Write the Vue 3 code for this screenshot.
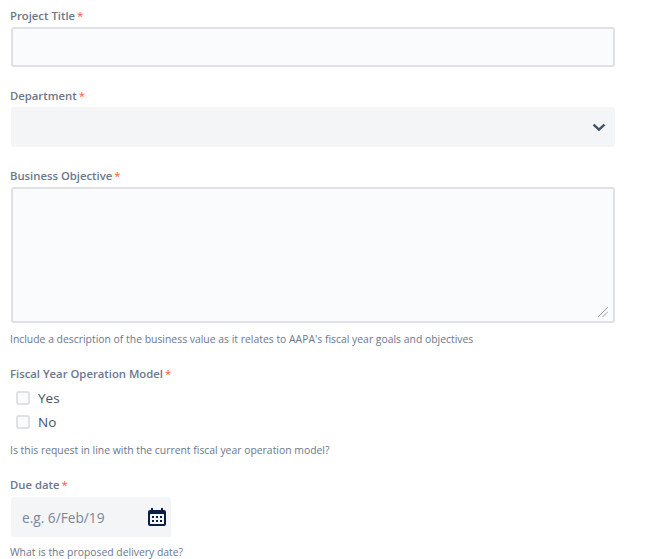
<script setup>
const options = ['Yes', 'No']
</script>

<template>
  <form class="form">
    <div class="field">
      <label class="label">Project Title<span class="req">*</span></label>
      <div class="input"></div>
    </div>
    <div class="field">
      <label class="label">Department<span class="req">*</span></label>
      <div class="select">
        <svg width="14" height="9" viewBox="0 0 14 9"><path d="M1.6 1.6 7 6.6l5.4-5" fill="none" stroke="#42526e" stroke-width="2.4"/></svg>
      </div>
    </div>
    <div class="field tight">
      <label class="label">Business Objective<span class="req">*</span></label>
      <div class="input area">
        <svg class="grip" width="10" height="10" viewBox="0 0 10 10"><path d="M0.5 9.5 9.5 0.5M5 9.5 9.5 5" stroke="#555" stroke-width="1" stroke-dasharray="1 .5" fill="none"/></svg>
      </div>
      <p class="help">Include a description of the business value as it relates to AAPA's fiscal year goals and objectives</p>
    </div>
    <div class="field tight">
      <label class="label">Fiscal Year Operation Model<span class="req">*</span></label>
      <div class="checks">
        <div v-for="o in options" :key="o" class="check"><span class="box"></span>{{ o }}</div>
      </div>
      <p class="help after-checks">Is this request in line with the current fiscal year operation model?</p>
    </div>
    <div class="field">
      <label class="label due-label">Due date<span class="req">*</span></label>
      <div class="date">
        <span class="ph">e.g. 6/Feb/19</span>
        <svg width="20" height="20" viewBox="0 0 20 20">
          <path fill="#091e42" d="M4 1h2v2h8V1h2v2h1a2 2 0 0 1 2 2v12a2 2 0 0 1-2 2H3a2 2 0 0 1-2-2V5a2 2 0 0 1 2-2h1z"/>
          <rect x="3" y="7" width="14" height="10" rx=".5" fill="#f4f5f7"/>
          <path fill="#091e42" d="M5 9h2v2H5zM9 9h2v2H9zM13 9h2v2h-2zM5 13h2v2H5zM9 13h2v2H9zM13 13h2v2h-2z"/>
        </svg>
      </div>
      <p class="help due-help">What is the proposed delivery date?</p>
    </div>
  </form>
</template>

<style>
html, body { background: #fff; overflow: hidden; }
</style>

<style scoped>
.form {
  width: 605px;
  padding: 7px 0 0 10px;
  font-family: "Open Sans", "Noto Sans", sans-serif;
  color: #172b4d;
}
.field { margin-bottom: 20px; }
.tight { margin-bottom: 18px; }
.label {
  display: block;
  height: 20px;
  line-height: 17px;
  font-size: 11.3px;
  font-weight: 600;
  color: #6b778c;
}
.due-label { height: 21px; }
.req { color: #ff5630; margin-left: 2px; font-weight: 400; }
.input {
  box-sizing: border-box;
  height: 40px;
  margin-left: 1px;
  background: #fafbfc;
  border: 2px solid #dfe1e6;
  border-radius: 3px;
}
.area { height: 136px; position: relative; }
.grip { position: absolute; right: 5px; bottom: 4px; }
.select {
  height: 40px;
  margin-left: 1px;
  background: #f4f5f7;
  border-radius: 3px;
  display: flex;
  align-items: center;
  justify-content: flex-end;
  padding-right: 9px;
}
.help {
  margin: 0;
  padding-top: 9px;
  font-size: 10.4px;
  line-height: 15px;
  color: #6b778c;
}
.after-checks { padding-top: 11px; }
.due-help { padding-top: 8px; }
.checks { display: flex; flex-direction: column; gap: 4px; padding: 3px 0 0 6px; }
.check {
  display: flex;
  align-items: center;
  gap: 8px;
  height: 20px;
  font-size: 13.5px;
  color: #42526e;
}
.box {
  box-sizing: border-box;
  width: 14px;
  height: 14px;
  background: #fafbfc;
  border: 2px solid #dfe1e6;
  border-radius: 3px;
}
.date {
  width: 160px;
  height: 40px;
  margin-left: 1px;
  background: #f4f5f7;
  border-radius: 3px;
  display: flex;
  align-items: center;
  justify-content: space-between;
  padding: 0 4px 0 11px;
  box-sizing: border-box;
}
.ph { font-size: 13.7px; color: #7a869a; }
</style>
